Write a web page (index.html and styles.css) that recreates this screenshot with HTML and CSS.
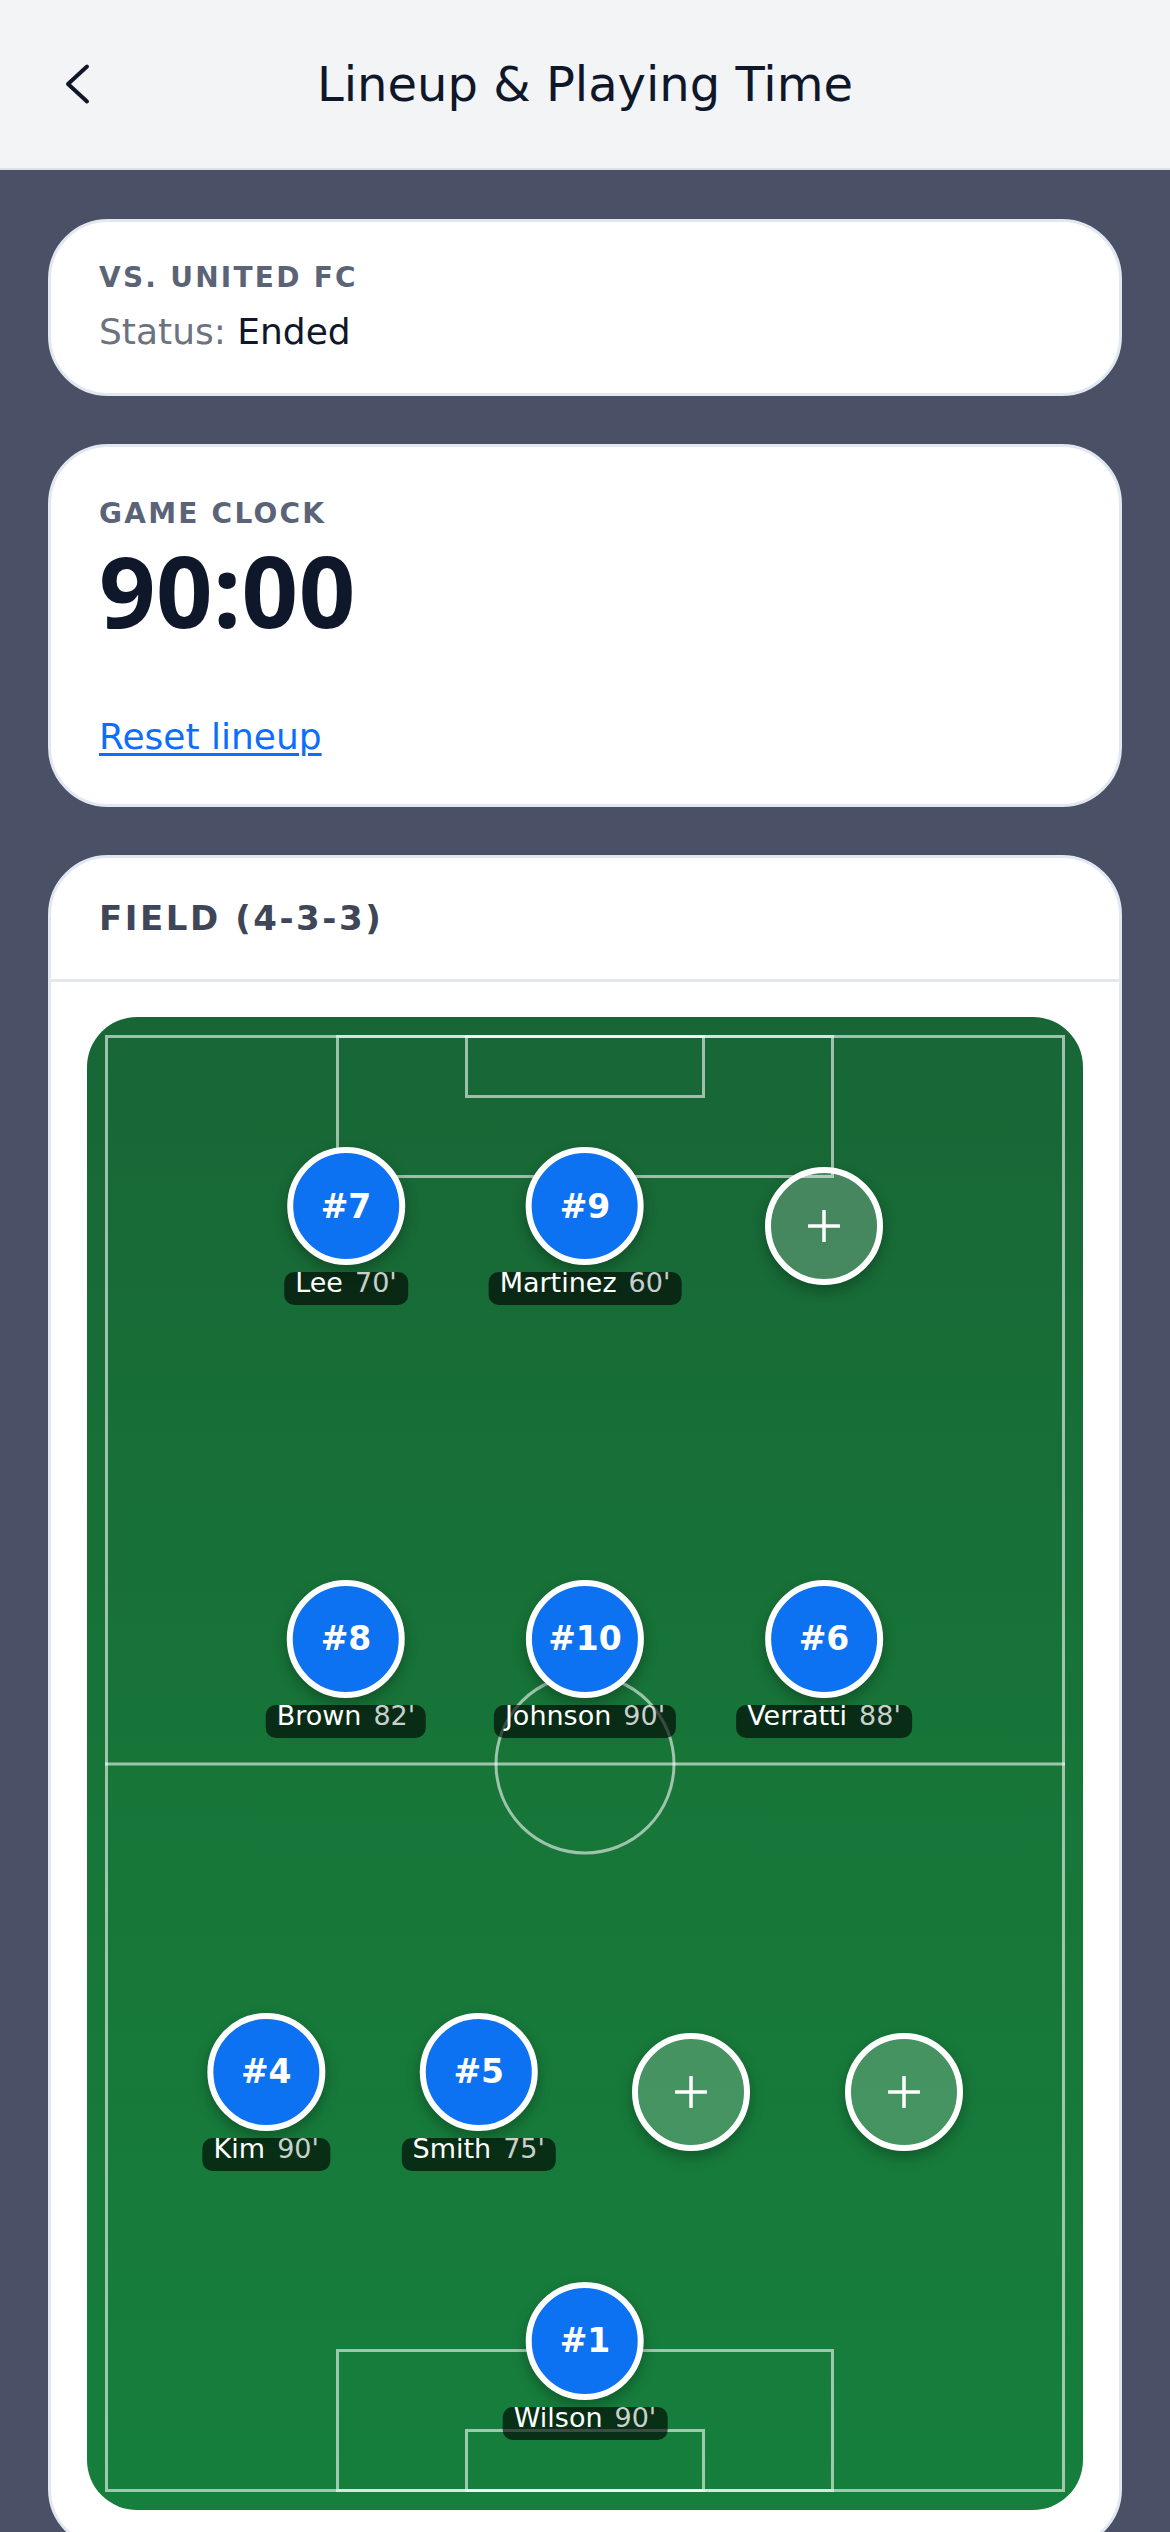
FILE: index.html
```html
<!DOCTYPE html>
<html lang="en">
<head>
<meta charset="utf-8">
<title>Lineup &amp; Playing Time</title>
<link rel="stylesheet" href="styles.css">
</head>
<body>
<header class="topbar">
  <button class="back" aria-label="Back">
    <svg width="32" height="48" viewBox="0 0 32 48"><polyline points="27,6.5 8,24 27,41.5" fill="none" stroke="#0f172a" stroke-width="4" stroke-linecap="round" stroke-linejoin="round"/></svg>
  </button>
  <h1 class="title">Lineup &amp; Playing Time</h1>
  <span></span>
</header>

<main class="content">
  <section class="card match">
    <div class="eyebrow">VS. UNITED FC</div>
    <div class="status"><span class="status-label">Status:</span> <span class="status-value">Ended</span></div>
  </section>

  <section class="card clock">
    <div class="eyebrow">GAME CLOCK</div>
    <div class="clock-time">90:00</div>
    <a class="reset" href="#">Reset lineup</a>
  </section>

  <section class="card field-card">
    <div class="card-head">
      <h2 class="field-title">FIELD (4-3-3)</h2>
    </div>
    <div class="card-body">
      <div class="pitch">
        <div class="ln outer"></div>
        <div class="ln halfway"></div>
        <div class="ln center-circle"></div>
        <div class="ln box box-top"></div>
        <div class="ln goal goal-top"></div>
        <div class="ln box box-bottom"></div>
        <div class="ln goal goal-bottom"></div>

        <div class="node" style="left:26%;top:14%"><div class="disc">#7</div><div class="tag"><span class="nm">Lee</span><span class="mn">70'</span></div></div>
        <div class="node" style="left:50%;top:14%"><div class="disc">#9</div><div class="tag"><span class="nm">Martinez</span><span class="mn">60'</span></div></div>
        <div class="node" style="left:74%;top:14%"><div class="disc empty"><svg width="32" height="32" viewBox="0 0 32 32"><path d="M16 1V31M1 16H31" stroke="#fff" stroke-width="3.5" stroke-linecap="round"/></svg></div></div>

        <div class="node" style="left:26%;top:43%"><div class="disc">#8</div><div class="tag"><span class="nm">Brown</span><span class="mn">82'</span></div></div>
        <div class="node" style="left:50%;top:43%"><div class="disc">#10</div><div class="tag"><span class="nm">Johnson</span><span class="mn">90'</span></div></div>
        <div class="node" style="left:74%;top:43%"><div class="disc">#6</div><div class="tag"><span class="nm">Verratti</span><span class="mn">88'</span></div></div>

        <div class="node" style="left:18%;top:72%"><div class="disc">#4</div><div class="tag"><span class="nm">Kim</span><span class="mn">90'</span></div></div>
        <div class="node" style="left:39.33%;top:72%"><div class="disc">#5</div><div class="tag"><span class="nm">Smith</span><span class="mn">75'</span></div></div>
        <div class="node" style="left:60.67%;top:72%"><div class="disc empty"><svg width="32" height="32" viewBox="0 0 32 32"><path d="M16 1V31M1 16H31" stroke="#fff" stroke-width="3.5" stroke-linecap="round"/></svg></div></div>
        <div class="node" style="left:82%;top:72%"><div class="disc empty"><svg width="32" height="32" viewBox="0 0 32 32"><path d="M16 1V31M1 16H31" stroke="#fff" stroke-width="3.5" stroke-linecap="round"/></svg></div></div>

        <div class="node" style="left:50%;top:90%"><div class="disc">#1</div><div class="tag"><span class="nm">Wilson</span><span class="mn">90'</span></div></div>
      </div>
    </div>
  </section>
</main>
</body>
</html>
```

FILE: styles.css
```css
* { box-sizing: border-box; }

html, body {
  margin: 0;
  padding: 0;
}

body {
  background: #4a5066;
  font-family: "DejaVu Sans", "Noto Sans", sans-serif;
  color: #0f172a;
}

.topbar {
  height: 170px;
  background: #f3f4f6;
  border-bottom: 2px solid #dde1e8;
  display: grid;
  grid-template-columns: 1fr auto 1fr;
  align-items: center;
}

.back {
  justify-self: start;
  margin-left: 60px;
  padding: 0;
  border: 0;
  background: none;
  width: 32px;
  height: 48px;
  display: block;
}

.back svg { display: block; }

.title {
  margin: 0;
  font-size: 48px;
  font-weight: 400;
  color: #0f172a;
  line-height: 56px;
}

.content {
  padding: 49px 48px 48px;
  display: flex;
  flex-direction: column;
  gap: 48px;
}

.card {
  background: #fff;
  border: 3px solid #e2e8f0;
  border-radius: 60px;
}

.match {
  padding: 38px 48px 39px;
}

.eyebrow {
  font-size: 28px;
  line-height: 36px;
  font-weight: 700;
  letter-spacing: 0.08em;
  color: #5b6477;
}

.status {
  margin-top: 14px;
  font-size: 36px;
  line-height: 44px;
}

.status-label { color: #6b7280; }
.status-value { color: #0f172a; }

.clock {
  padding: 49px 48px 45px;
  display: flex;
  flex-direction: column;
  align-items: flex-start;
}

.clock-time {
  margin-top: 0;
  font-family: "Noto Sans", "DejaVu Sans", sans-serif;
  font-weight: 700;
  font-size: 99px;
  line-height: 115px;
  letter-spacing: 0.005em;
  color: #0f172a;
}

.reset {
  margin-top: 68px;
  font-size: 36px;
  line-height: 44px;
  color: #0d6efd;
  text-decoration: underline;
  text-decoration-thickness: 3px;
  text-underline-offset: 4px;
}

.card-head {
  padding: 40px 48px 41px;
  border-bottom: 3px solid #e2e8f0;
}

.field-title {
  margin: 0;
  font-size: 34px;
  line-height: 40px;
  font-weight: 700;
  letter-spacing: 0.075em;
  color: #3e4658;
}

.card-body {
  padding: 35px 36px 36px;
}

.pitch {
  position: relative;
  height: 1493px;
  border-radius: 50px;
  background: linear-gradient(180deg, #186636 0%, #177538 50%, #167f3d 100%);
  overflow: hidden;
}

.ln {
  position: absolute;
  border: 3px solid rgba(255, 255, 255, 0.58);
}

.outer {
  left: 18px;
  right: 18px;
  top: 18px;
  bottom: 18px;
}

.halfway {
  left: 18px;
  right: 18px;
  top: 50%;
  height: 3px;
  border: 0;
  background: rgba(255, 255, 255, 0.58);
  transform: translateY(-50%);
}

.center-circle {
  left: 50%;
  top: 50%;
  width: 181px;
  height: 181px;
  border-radius: 50%;
  transform: translate(-50%, -50%);
}

.box {
  left: 25%;
  width: 50%;
  height: 143px;
}

.goal {
  left: 38%;
  width: 24%;
  height: 63px;
}

.box-top, .goal-top { top: 18px; }
.box-bottom, .goal-bottom { bottom: 18px; }

.node {
  position: absolute;
  transform: translate(-50%, -50%);
  display: flex;
  flex-direction: column;
  align-items: center;
  gap: 7px;
}

.disc {
  width: 118px;
  height: 118px;
  border-radius: 50%;
  border: 6px solid #fff;
  background: #0d72f2;
  color: #fff;
  display: grid;
  place-items: center;
  font-size: 33px;
  font-weight: 700;
  box-shadow: 0 6px 14px rgba(0, 0, 0, 0.28);
}

.disc.empty {
  background: rgba(255, 255, 255, 0.2);
}

.disc svg { display: block; }

.tag {
  display: flex;
  gap: 12px;
  white-space: nowrap;
  padding: 0 11px 11px;
  border-radius: 10px;
  background: rgba(0, 0, 0, 0.62);
  font-size: 27px;
  line-height: 22px;
}

.tag .nm { color: #fff; }
.tag .mn { color: rgba(255, 255, 255, 0.78); }
```
